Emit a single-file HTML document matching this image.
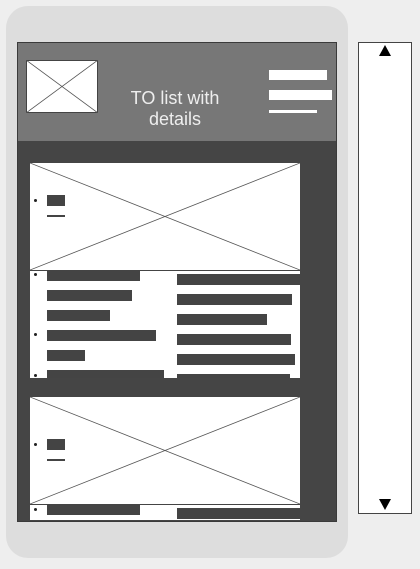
<html><head><style>
body{margin:0;width:420px;height:569px;background:#eee;position:relative;overflow:hidden;font-family:"Liberation Sans",sans-serif}
div{position:absolute;box-sizing:border-box}
.b{background:#444}
.w{background:#fff}
.dot{width:3px;height:3px;border-radius:50%;background:#222}
</style></head><body>
<div style="left:6px;top:6px;width:342px;height:552px;background:#ddd;border-radius:22px"></div>
<div style="left:17px;top:42px;width:320px;height:480px;background:#454545;border:1px solid #3a3a3a;overflow:hidden">
<div style="left:0;top:0;width:320px;height:98px;background:#777"></div>
</div>
<svg style="position:absolute;left:26px;top:60px" width="72" height="53"><rect x=".5" y=".5" width="71" height="52" fill="#fff" stroke="#444"/><path d="M0 0L72 53M72 0L0 53" stroke="#555" stroke-width=".8"/></svg>
<div style="left:105px;top:88px;width:140px;text-align:center;color:#eee;font-size:18px;line-height:21px">TO list with<br>details</div>
<div class="w" style="left:269px;top:70px;width:58px;height:10px"></div>
<div class="w" style="left:269px;top:90px;width:63px;height:10px"></div>
<div class="w" style="left:269px;top:110px;width:48px;height:3px"></div>

<svg style="position:absolute;left:30px;top:163px" width="270" height="108"><rect width="270" height="108" fill="#fff"/><path d="M0 0L270 107M270 0L0 107" stroke="#555" stroke-width=".8"/><path d="M0 107.5H270" stroke="#444"/></svg>
<div class="dot" style="left:34px;top:199px"></div>
<div class="b" style="left:47px;top:195px;width:18px;height:11px"></div>
<div class="b" style="left:47px;top:215px;width:18px;height:2px"></div>
<div class="w" style="left:30px;top:271px;width:270px;height:107px"></div>
<div class="dot" style="left:34px;top:273px"></div>
<div class="dot" style="left:34px;top:333px"></div>
<div class="dot" style="left:34px;top:374px"></div>
<div class="b" style="left:47px;top:270px;width:93px;height:11px"></div>
<div class="b" style="left:47px;top:290px;width:85px;height:11px"></div>
<div class="b" style="left:47px;top:310px;width:63px;height:11px"></div>
<div class="b" style="left:47px;top:330px;width:109px;height:11px"></div>
<div class="b" style="left:47px;top:350px;width:38px;height:11px"></div>
<div class="b" style="left:47px;top:370px;width:117px;height:8px"></div>
<div class="b" style="left:177px;top:274px;width:123px;height:11px"></div>
<div class="b" style="left:177px;top:294px;width:115px;height:11px"></div>
<div class="b" style="left:177px;top:314px;width:90px;height:11px"></div>
<div class="b" style="left:177px;top:334px;width:114px;height:11px"></div>
<div class="b" style="left:177px;top:354px;width:118px;height:11px"></div>
<div class="b" style="left:177px;top:374px;width:113px;height:4px"></div>

<svg style="position:absolute;left:30px;top:397px" width="270" height="108"><rect width="270" height="108" fill="#fff"/><path d="M0 0L270 107M270 0L0 107" stroke="#555" stroke-width=".8"/><path d="M0 107.5H270" stroke="#444"/></svg>
<div class="dot" style="left:34px;top:443px"></div>
<div class="b" style="left:47px;top:439px;width:18px;height:11px"></div>
<div class="b" style="left:47px;top:459px;width:18px;height:2px"></div>
<div class="w" style="left:30px;top:505px;width:270px;height:15px"></div>
<div class="dot" style="left:34px;top:508px"></div>
<div class="b" style="left:47px;top:504px;width:93px;height:11px"></div>
<div class="b" style="left:177px;top:508px;width:123px;height:11px"></div>

<div style="left:358px;top:42px;width:54px;height:472px;background:#fff;border:1px solid #444"></div>
<svg style="position:absolute;left:379px;top:45px" width="12" height="11"><path d="M6 0L12 11H0Z" fill="#000"/></svg>
<svg style="position:absolute;left:379px;top:499px" width="12" height="11"><path d="M0 0H12L6 11Z" fill="#000"/></svg>
</body></html>
